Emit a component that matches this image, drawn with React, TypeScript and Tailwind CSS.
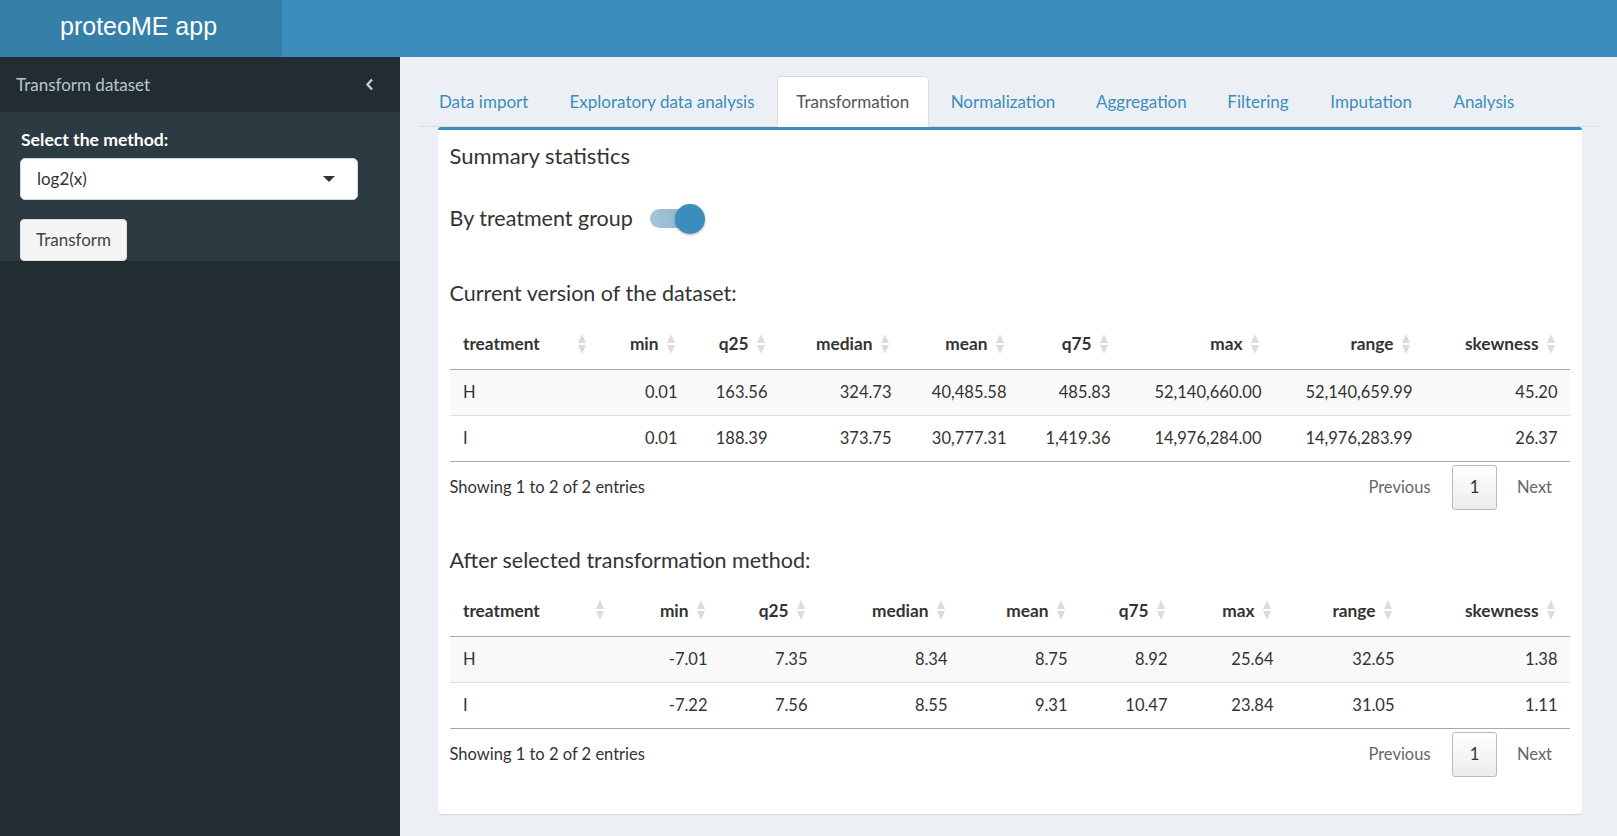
import React from 'react';

type Column = { label: string; width: string };

const currentCols: Column[] = [
  { label: 'treatment', width: 'w-[151px]' },
  { label: 'min', width: 'w-[89px]' },
  { label: 'q25', width: 'w-[90px]' },
  { label: 'median', width: 'w-[124px]' },
  { label: 'mean', width: 'w-[115px]' },
  { label: 'q75', width: 'w-[104px]' },
  { label: 'max', width: 'w-[151px]' },
  { label: 'range', width: 'w-[151px]' },
  { label: 'skewness', width: 'w-[145px]' },
];

const afterCols: Column[] = [
  { label: 'treatment', width: 'w-[169px]' },
  { label: 'min', width: 'w-[101px]' },
  { label: 'q25', width: 'w-[100px]' },
  { label: 'median', width: 'w-[140px]' },
  { label: 'mean', width: 'w-[120px]' },
  { label: 'q75', width: 'w-[100px]' },
  { label: 'max', width: 'w-[106px]' },
  { label: 'range', width: 'w-[121px]' },
  { label: 'skewness', width: 'w-[163px]' },
];

const currentRows = [
  ['H', '0.01', '163.56', '324.73', '40,485.58', '485.83', '52,140,660.00', '52,140,659.99', '45.20'],
  ['I', '0.01', '188.39', '373.75', '30,777.31', '1,419.36', '14,976,284.00', '14,976,283.99', '26.37'],
];

const afterRows = [
  ['H', '-7.01', '7.35', '8.34', '8.75', '8.92', '25.64', '32.65', '1.38'],
  ['I', '-7.22', '7.56', '8.55', '9.31', '10.47', '23.84', '31.05', '1.11'],
];

const tabs = [
  { label: 'Data import', width: 'w-[127.3px]' },
  { label: 'Exploratory data analysis', width: 'w-[224.5px]' },
  { label: 'Transformation', width: 'w-[151.9px]', active: true },
  { label: 'Normalization', width: 'w-[143.6px]' },
  { label: 'Aggregation', width: 'w-[128.2px]' },
  { label: 'Filtering', width: 'w-[100px]' },
  { label: 'Imputation', width: 'w-[121.4px]' },
  { label: 'Analysis', width: 'w-[99px]' },
];

function SortIcon() {
  return (
    <svg
      width="8"
      height="20"
      viewBox="0 0 8 20"
      className="absolute right-[15px] top-1/2 -translate-y-1/2"
    >
      <path d="M4 0 L8 9 L0 9 Z" fill="#dcdcdc" />
      <path d="M0 11 L8 11 L4 20 Z" fill="#dcdcdc" />
    </svg>
  );
}

function StatsTable({ cols, rows }: { cols: Column[]; rows: string[][] }) {
  return (
    <table className="w-[1120px] table-fixed border-collapse text-[16.5px] text-[#333]">
      <thead>
        <tr className="border-b border-[#a9a9a9]">
          {cols.map((c, i) => (
            <th
              key={c.label}
              className={`${c.width} relative h-[51px] py-0 text-[17.3px] font-bold ${
                i === 0 ? 'pl-[13.5px] text-left' : 'pr-[31px] text-right'
              }`}
            >
              {c.label}
              <SortIcon />
            </th>
          ))}
        </tr>
      </thead>
      <tbody>
        {rows.map((r, ri) => (
          <tr
            key={r[0]}
            className={`border-b ${
              ri === rows.length - 1 ? 'border-[#a9a9a9]' : 'border-[#ddd]'
            } ${ri % 2 === 0 ? 'bg-[#f9f9f9]' : 'bg-white'}`}
          >
            {r.map((v, i) => (
              <td
                key={i}
                className={`h-[46px] py-0 ${i === 0 ? 'pl-[13.5px] text-left' : 'pr-[12px] text-right'}`}
              >
                {v}
              </td>
            ))}
          </tr>
        ))}
      </tbody>
    </table>
  );
}

function TableFooter() {
  return (
    <div className="flex h-[45px] items-center justify-between text-[16.5px] text-[#333]">
      <span>Showing 1 to 2 of 2 entries</span>
      <div className="flex items-center gap-[2.5px]">
        <span className="flex h-[45px] w-[100px] items-center justify-center text-[#666]">Previous</span>
        <span className="flex h-[45px] w-[45px] items-center justify-center rounded-[3px] border border-[#b9b9b9] bg-linear-to-b from-white to-[#ececec] text-[#333]">
          1
        </span>
        <span className="flex h-[45px] w-[70px] items-center justify-center text-[#666]">Next</span>
      </div>
    </div>
  );
}

export default function App() {
  return (
    <div className="flex h-[836px] w-full flex-col overflow-hidden font-['Lato',sans-serif] text-[17px] leading-[25px]">
      {/* Top bar */}
      <header className="flex h-[57px] shrink-0 bg-[#3c8dbc]">
        <div className="h-full w-[282px] bg-[#367fa9] pl-[60px] pt-[14px] font-['Liberation_Sans',Arial,sans-serif] text-[25px] leading-[25px] text-white">
          proteoME app
        </div>
      </header>

      <div className="flex min-h-0 flex-1">
        {/* Sidebar */}
        <aside className="w-[400px] shrink-0 bg-[#222d32]">
          <div className="flex h-[54.7px] items-center justify-between pl-[16px] pr-[26px] text-[#b8c7ce]">
            <span>Transform dataset</span>
            <svg width="9" height="13" viewBox="0 0 9 13">
              <path d="M7 1.5 L2.5 6.5 L7 11.5" stroke="#c5d0d6" strokeWidth="2.4" fill="none" />
            </svg>
          </div>
          <div className="h-[149px] bg-[#2c3b41] px-[20px] pt-[15px]">
            <div className="h-[25px] pl-[1px] text-[17.6px] font-bold text-white">Select the method:</div>
            <div className="mt-[6px] flex h-[42px] w-[338px] items-center justify-between rounded-[5px] border border-[#d2d6de] bg-white pl-[16px] pr-[22px] text-[#333]">
              <span>log2(x)</span>
              <svg width="12" height="6" viewBox="0 0 12 6">
                <path d="M0 0 H12 L6 6 Z" fill="#333" />
              </svg>
            </div>
            <button className="mt-[19px] flex h-[42px] w-[107px] items-center justify-center rounded-[4px] border border-[#ddd] bg-[#f4f4f4] text-[#444]">
              Transform
            </button>
          </div>
        </aside>

        {/* Main content */}
        <main className="flex-1 bg-[#ecf0f5] pl-[19px] pt-[19px]">
          <ul className="flex h-[51px] w-[1182px] border-b border-[#ddd] pl-[1px]">
            {tabs.map((t) => (
              <li
                key={t.label}
                className={`${t.width} mr-[2.5px] flex h-[51px] items-center justify-center rounded-t-[5px] border ${
                  t.active
                    ? 'border-[#ddd] border-b-white bg-white text-[#555]'
                    : 'border-transparent text-[#3c8dbc]'
                }`}
              >
                {t.label}
              </li>
            ))}
          </ul>

          <section className="ml-[18.5px] w-[1144px] rounded-[3px] border-t-[3px] border-[#3c8dbc] bg-white px-[12px] pb-[37px] pt-[12.5px] text-[#333] shadow-[0_1px_1px_rgba(0,0,0,0.1)]">
            <h3 className="h-[25px] text-[22px] leading-[25px]">Summary statistics</h3>

            <div className="mt-[36px] flex h-[30px] items-center">
              <span className="w-[200px] text-[21.5px] leading-[25px]">By treatment group</span>
              <div className="relative h-[30px] w-[55px]">
                <div className="absolute left-0 top-[5.5px] h-[19px] w-[50px] rounded-full bg-linear-to-r from-[#a9c5d6] to-[#7fb0cf]" />
                <div className="absolute left-[25px] top-0 h-[30px] w-[30px] rounded-full bg-[#3c8dbc] shadow-[0_1px_3px_rgba(0,0,0,0.3)]" />
              </div>
            </div>

            <h4 className="mt-[47px] h-[25px] text-[21.5px] leading-[25px]">Current version of the dataset:</h4>
            <div className="mt-[13px]">
              <StatsTable cols={currentCols} rows={currentRows} />
            </div>
            <div className="mt-[3px]">
              <TableFooter />
            </div>

            <h4 className="mt-[38px] h-[25px] text-[21.5px] leading-[25px]">After selected transformation method:</h4>
            <div className="mt-[12px]">
              <StatsTable cols={afterCols} rows={afterRows} />
            </div>
            <div className="mt-[3px]">
              <TableFooter />
            </div>
          </section>
        </main>
      </div>
    </div>
  );
}
